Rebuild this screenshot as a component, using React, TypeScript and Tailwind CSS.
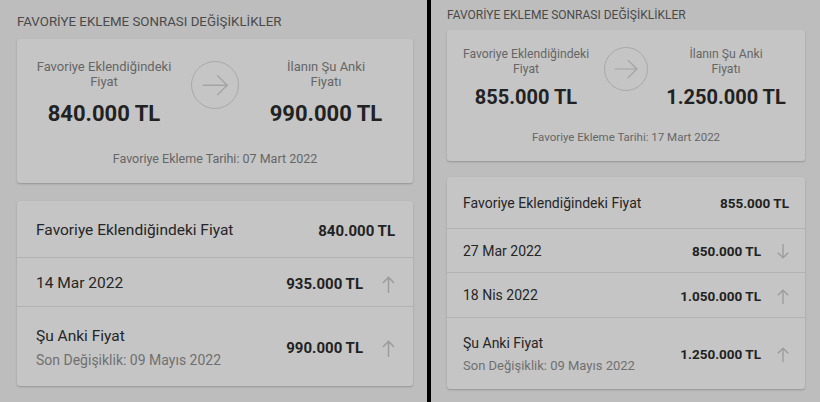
type Row = { label: string; sub?: string; price: string; dir?: 'up' | 'down' }

type Data = {
  fromPrice: string
  toPrice: string
  addedAt: string
  rows: Row[]
}

const left: Data = {
  fromPrice: '840.000 TL',
  toPrice: '990.000 TL',
  addedAt: '07 Mart 2022',
  rows: [
    { label: 'Favoriye Eklendiğindeki Fiyat', price: '840.000 TL' },
    { label: '14 Mar 2022', price: '935.000 TL', dir: 'up' },
    { label: 'Şu Anki Fiyat', sub: 'Son Değişiklik: 09 Mayıs 2022', price: '990.000 TL', dir: 'up' },
  ],
}

const right: Data = {
  fromPrice: '855.000 TL',
  toPrice: '1.250.000 TL',
  addedAt: '17 Mart 2022',
  rows: [
    { label: 'Favoriye Eklendiğindeki Fiyat', price: '855.000 TL' },
    { label: '27 Mar 2022', price: '850.000 TL', dir: 'down' },
    { label: '18 Nis 2022', price: '1.050.000 TL', dir: 'up' },
    { label: 'Şu Anki Fiyat', sub: 'Son Değişiklik: 09 Mayıs 2022', price: '1.250.000 TL', dir: 'up' },
  ],
}

// full class sets per panel size, the right screenshot is a bit smaller
const sizes = {
  lg: {
    panel: 'w-[427px] pl-[17px] pr-[14px]',
    header: 'pt-[14px] pb-[9px] text-[13.3px] leading-[16px]',
    card: 'pt-[20px] pb-[17px]',
    grid: 'grid-cols-[1fr_48px_1fr] gap-x-[16px] px-[16px]',
    label: 'text-[13px] leading-[15px]',
    circle: 'w-[48px] h-[48px] mt-[2px]',
    price: 'mt-[12px] text-[22px] leading-[26px]',
    date: 'mt-[24px] text-[12.5px] leading-[15px]',
    list: 'mt-[18px]',
    row: 'pl-[19px] pr-[18px] pt-[4px] text-[15.5px]',
    rowH: ['h-[56px]', 'h-[49px]', 'h-[80px]'],
    rowPrice: 'text-[15px]',
    sub: 'mt-[6px] text-[14px]',
    arrow: 'w-[13px] h-[17px] ml-[19px]',
  },
  sm: {
    panel: 'w-[389px] pl-[16px] pr-[15px]',
    header: 'pt-[8px] pb-[7px] text-[12px] leading-[15px]',
    card: 'pt-[17px] pb-[17px]',
    grid: 'grid-cols-[1fr_44px_1fr] gap-x-[12px] px-[13px]',
    label: 'text-[12.2px] leading-[15px]',
    circle: 'w-[44px] h-[44px]',
    price: 'mt-[8px] text-[20px] leading-[24px]',
    date: 'mt-[21px] text-[11.5px] leading-[14px]',
    list: 'mt-[16px]',
    row: 'px-[16px] pt-[2px] text-[14px]',
    rowH: ['h-[51px]', 'h-[44px]', 'h-[45px]', 'h-[72px]'],
    rowPrice: 'text-[13.5px]',
    sub: 'mt-[5px] text-[13px]',
    arrow: 'w-[12px] h-[15px] ml-[16px]',
  },
}

function CircleArrow({ className }: { className: string }) {
  return (
    <div className={`${className} rounded-full border border-[#a9a9a9] flex items-center justify-center justify-self-center`}>
      <svg viewBox="0 0 24 24" className="w-[62%] h-[62%]" fill="none" stroke="#a3a3a3" strokeWidth="1.1" strokeLinecap="round" strokeLinejoin="round">
        <path d="M2 12h20" />
        <path d="M14 4l8 8-8 8" />
      </svg>
    </div>
  )
}

function TrendArrow({ dir, className }: { dir: 'up' | 'down'; className: string }) {
  return (
    <svg viewBox="0 0 14 18" preserveAspectRatio="none" className={`${className} shrink-0 ${dir === 'down' ? 'rotate-180' : ''}`} fill="none" stroke="#9c9c9c" strokeWidth="1.6">
      <path d="M7 1.5V18" />
      <path d="M1 7.5l6-6 6 6" />
    </svg>
  )
}

function Panel({ data, size }: { data: Data; size: 'lg' | 'sm' }) {
  const s = sizes[size]
  return (
    <div className={`${s.panel} h-full bg-[#bdbdbd] shrink-0`}>
      <div className={`${s.header} text-[#4a4a4a]`}>FAVORİYE EKLEME SONRASI DEĞİŞİKLİKLER</div>

      {/* summary card */}
      <div className={`${s.card} bg-[#c5c5c5] rounded-[3px] shadow-[0_1px_2px_rgba(0,0,0,0.22)]`}>
        <div className={`grid ${s.grid} items-start`}>
          <div className="text-center">
            <p className={`${s.label} text-[#666]`}>Favoriye Eklendiğindeki<br />Fiyat</p>
            <p className={`${s.price} font-bold text-[#222] whitespace-nowrap`}>{data.fromPrice}</p>
          </div>
          <CircleArrow className={s.circle} />
          <div className="text-center">
            <p className={`${s.label} text-[#666]`}>İlanın Şu Anki<br />Fiyatı</p>
            <p className={`${s.price} font-bold text-[#222] whitespace-nowrap`}>{data.toPrice}</p>
          </div>
        </div>
        <p className={`${s.date} text-center text-[#666]`}>Favoriye Ekleme Tarihi: {data.addedAt}</p>
      </div>

      {/* history list */}
      <div className={`${s.list} bg-[#c5c5c5] rounded-[3px] shadow-[0_1px_2px_rgba(0,0,0,0.22)]`}>
        {data.rows.map((r, i) => (
          <div key={i} className={`${s.rowH[i]} ${s.row} flex items-center ${i > 0 ? 'border-t border-[#b2b2b2]' : ''}`}>
            <div className="flex-1 min-w-0">
              <p className="text-[#262626] leading-tight">{r.label}</p>
              {r.sub && <p className={`${s.sub} text-[#707070] leading-tight`}>{r.sub}</p>}
            </div>
            <span className={`${s.rowPrice} font-bold text-[#222] whitespace-nowrap`}>{r.price}</span>
            {r.dir && <TrendArrow dir={r.dir} className={s.arrow} />}
          </div>
        ))}
      </div>
    </div>
  )
}

export default function App() {
  return (
    <div className="w-[820px] h-[402px] flex bg-black overflow-hidden" style={{ fontFamily: 'Roboto, "Noto Sans", sans-serif' }}>
      <Panel data={left} size="lg" />
      <div className="w-[4px] shrink-0 bg-black" />
      <Panel data={right} size="sm" />
    </div>
  )
}
